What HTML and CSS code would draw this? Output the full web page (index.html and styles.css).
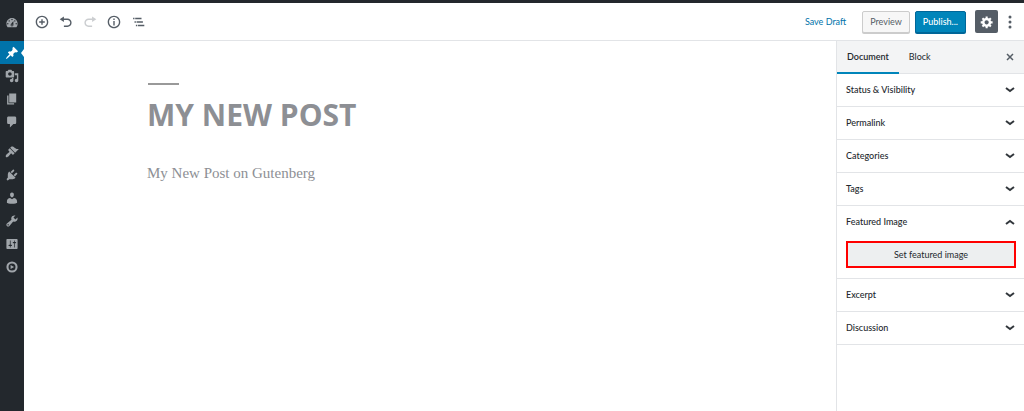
FILE: index.html
```
<!DOCTYPE html>
<html lang="en">
<head>
    <meta charset="UTF-8">
    <meta name="viewport" content="width=device-width, initial-scale=1.0">
    <title>Edit Post</title>
    <link rel="stylesheet" href="styles.css">
</head>
<body>
    <div class="adminbar"></div>

    <div class="layout">
        <!-- Admin menu -->
        <nav class="admin-menu" aria-label="Main menu">
            <a href="#" aria-label="Dashboard"><svg viewBox="0 0 20 20"><path d="M3.76 16h12.48c1.1-1.37 1.76-3.11 1.76-5 0-4.42-3.58-8-8-8s-8 3.58-8 8c0 1.89.66 3.63 1.76 5zM10 4c.55 0 1 .45 1 1s-.45 1-1 1-1-.45-1-1 .45-1 1-1zM6 6c.55 0 1 .45 1 1s-.45 1-1 1-1-.45-1-1 .45-1 1-1zm8 0c.55 0 1 .45 1 1s-.45 1-1 1-1-.45-1-1 .45-1 1-1zm-5.37 5.55L12 7v6c0 1.1-.9 2-2 2s-2-.9-2-2c0-.57.24-1.08.63-1.45zM4 10c.55 0 1 .45 1 1s-.45 1-1 1-1-.45-1-1 .45-1 1-1zm12 0c.55 0 1 .45 1 1s-.45 1-1 1-1-.45-1-1 .45-1 1-1zm-5 3c0-.55-.45-1-1-1s-1 .45-1 1 .45 1 1 1 1-.45 1-1z"/></svg></a>
            <a href="#" class="current group-start" aria-label="Posts"><svg viewBox="0 0 20 20"><path d="M10.44 3.02l1.82-1.82 6.36 6.35-1.83 1.82c-1.05-.68-2.48-.57-3.41.36l-.75.75c-.92.93-1.04 2.35-.35 3.41l-1.83 1.82-2.41-2.41-2.8 2.79c-.42.42-3.38 2.71-3.8 2.29s1.86-3.39 2.28-3.81l2.79-2.79L4.1 9.36l1.83-1.82c1.05.69 2.48.57 3.4-.36l.75-.75c.93-.92 1.05-2.35.36-3.41z"/></svg></a>
            <a href="#" aria-label="Media"><svg viewBox="0 0 20 20"><path d="M13 11V4c0-.55-.45-1-1-1h-1.67L9 1H5L3.67 3H2c-.55 0-1 .45-1 1v7c0 .55.45 1 1 1h10c.55 0 1-.45 1-1zM7 4.5c1.38 0 2.5 1.12 2.5 2.5S8.38 9.5 7 9.5 4.5 8.38 4.5 7 5.62 4.5 7 4.5zM14 6h5v10.5c0 1.38-1.12 2.5-2.5 2.5S14 17.88 14 16.5s1.12-2.5 2.5-2.5c.17 0 .34.02.5.05V9h-3V6zm-4 8.05V13h2v3.5c0 1.38-1.12 2.5-2.5 2.5S7 17.88 7 16.5 8.12 14 9.5 14c.17 0 .34.02.5.05z"/></svg></a>
            <a href="#" aria-label="Pages"><svg viewBox="0 0 20 20"><path d="M6 15V2h10v13H6zm-1 1h8v2H3V5h2v11z"/></svg></a>
            <a href="#" aria-label="Comments"><svg viewBox="0 0 20 20"><path d="M5 2h9c1.1 0 2 .9 2 2v7c0 1.1-.9 2-2 2h-2l-5 5v-5H5c-1.1 0-2-.9-2-2V4c0-1.1.9-2 2-2z"/></svg></a>
            <a href="#" class="group-start" aria-label="Appearance"><svg viewBox="0 0 20 20"><path d="M14.48 11.06L7.41 3.99l1.5-1.5c.5-.56 2.3-.47 3.51.32 1.21.8 1.43 1.28 2.91 2.1 1.18.64 2.45 1.26 4.45.85zm-.71.71L6.7 4.7 4.93 6.47c-.39.39-.39 1.02 0 1.41l1.06 1.06c.39.39.39 1.03 0 1.42-.6.6-1.43 1.11-2.21 1.69-.35.26-.7.53-1.01.84C1.43 14.23.4 16.08 1.4 17.07c.99 1 2.84-.03 4.18-1.36.31-.31.58-.66.85-1.02.57-.78 1.08-1.61 1.69-2.21.39-.39 1.02-.39 1.41 0l1.06 1.06c.39.39 1.02.39 1.41 0z"/></svg></a>
            <a href="#" aria-label="Plugins"><svg viewBox="0 0 20 20"><path d="M13.11 4.36L9.87 7.6 8 5.73l3.24-3.24c.35-.34 1.05-.2 1.56.32.52.51.66 1.21.31 1.55zm-8 1.77l.91-1.12 9.01 9.01-1.19.84c-.71.71-2.63 1.16-3.82 1.16H6.14L4.9 17.26c-.59.59-1.54.59-2.12 0-.59-.58-.59-1.53 0-2.12l1.24-1.24v-3.88c0-1.13.4-3.19 1.09-3.89zm7.26 3.97l3.24-3.24c.34-.35 1.04-.21 1.55.31.52.51.66 1.21.31 1.55l-3.24 3.25z"/></svg></a>
            <a href="#" aria-label="Users"><svg viewBox="0 0 20 20"><path d="M10 9.25c-2.27 0-2.73-3.44-2.73-3.44C7 4.02 7.82 2 9.97 2c2.16 0 2.98 2.02 2.71 3.81 0 0-.41 3.44-2.68 3.44zm0 2.57L12.72 10c2.39 0 4.52 2.33 4.52 4.53v2.49s-3.65 1.13-7.24 1.13c-3.65 0-7.24-1.13-7.24-1.13v-2.49c0-2.25 1.94-4.48 4.47-4.48z"/></svg></a>
            <a href="#" aria-label="Tools"><svg viewBox="0 0 20 20"><path d="M16.68 9.77c-1.34 1.34-3.3 1.67-4.95.99l-5.41 6.52c-.99.99-2.59.99-3.58 0s-.99-2.59 0-3.57l6.52-5.42c-.68-1.65-.35-3.61.99-4.95 1.28-1.28 3.12-1.62 4.72-1.06l-2.89 2.89 2.82 2.82 2.86-2.87c.53 1.58.18 3.39-1.08 4.65zM3.81 16.21c.4.39 1.04.39 1.43 0 .4-.4.4-1.04 0-1.43-.39-.4-1.03-.4-1.43 0-.39.39-.39 1.03 0 1.43z"/></svg></a>
            <a href="#" aria-label="Settings"><svg viewBox="0 0 20 20"><path d="M18 16V4c0-.55-.45-1-1-1H3c-.55 0-1 .45-1 1v12c0 .55.45 1 1 1h14c.55 0 1-.45 1-1zM8 11h1c.55 0 1 .45 1 1s-.45 1-1 1H8v1.5c0 .28-.22.5-.5.5s-.5-.22-.5-.5V13H6c-.55 0-1-.45-1-1s.45-1 1-1h1V5.5c0-.28.22-.5.5-.5s.5.22.5.5V11zm5-2h-1c-.55 0-1-.45-1-1s.45-1 1-1h1V5.5c0-.28.22-.5.5-.5s.5.22.5.5V7h1c.55 0 1 .45 1 1s-.45 1-1 1h-1v5.5c0 .28-.22.5-.5.5s-.5-.22-.5-.5V9z"/></svg></a>
            <button type="button" aria-label="Collapse menu"><svg viewBox="0 0 20 20"><path fill-rule="evenodd" d="M10 2a8 8 0 1 0 0 16 8 8 0 0 0 0-16zm0 3a5 5 0 1 1 0 10 5 5 0 0 1 0-10zM8 7v6l5-3z"/></svg></button>
        </nav>

        <div class="editor">
            <!-- Toolbar -->
            <header class="toolbar">
                <div class="tools">
                    <button type="button" aria-label="Add block"><svg viewBox="0 0 20 20"><path d="M10 1c-5 0-9 4-9 9s4 9 9 9 9-4 9-9-4-9-9-9zm0 16c-3.9 0-7-3.1-7-7s3.1-7 7-7 7 3.1 7 7-3.1 7-7 7zm1-11H9v3H6v2h3v3h2v-3h3V9h-3V6z"/></svg></button>
                    <button type="button" aria-label="Undo"><svg viewBox="0 0 20 20"><path d="M12 5H7V2L1 6l6 4V7h5c2.2 0 4 1.8 4 4s-1.8 4-4 4H7v2h5c3.3 0 6-2.7 6-6s-2.7-6-6-6z"/></svg></button>
                    <button type="button" aria-label="Redo" disabled><svg viewBox="0 0 20 20"><path d="M8 5h5V2l6 4-6 4V7H8c-2.2 0-4 1.8-4 4s1.8 4 4 4h5v2H8c-3.3 0-6-2.7-6-6s2.7-6 6-6z"/></svg></button>
                    <button type="button" aria-label="Content structure"><svg viewBox="0 0 20 20"><path d="M10 1c-5 0-9 4-9 9s4 9 9 9 9-4 9-9-4-9-9-9zm0 16c-3.9 0-7-3.1-7-7s3.1-7 7-7 7 3.1 7 7-3.1 7-7 7zM9 5h2v2H9zm0 3.5h2V15H9z"/></svg></button>
                    <button type="button" aria-label="Block navigation"><svg viewBox="0 0 20 20"><path d="M3 4h2v2H3zm3 0h9v2H6zM5 9h2v2H5zm3 0h9v2H8zM7 14h2v2H7zm3 0h9v2h-9z"/></svg></button>
                </div>
                <div class="actions">
                    <button type="button" class="btn btn-link">Save Draft</button>
                    <button type="button" class="btn btn-preview">Preview</button>
                    <button type="button" class="btn btn-publish">Publish...</button>
                    <button type="button" class="btn-settings" aria-label="Settings"><svg viewBox="0 0 20 20"><path d="M18 12h-2.18c-.17.7-.44 1.35-.81 1.93l1.54 1.54-2.1 2.1-1.54-1.54c-.58.36-1.23.63-1.91.79V19H8v-2.18c-.68-.16-1.33-.43-1.91-.79l-1.54 1.54-2.12-2.12 1.54-1.54c-.36-.58-.63-1.23-.79-1.91H1V9.03h2.17c.16-.7.44-1.35.8-1.94L2.43 5.55l2.1-2.1 1.54 1.54c.58-.37 1.24-.64 1.93-.81V2h3v2.18c.68.16 1.33.43 1.91.79l1.54-1.54 2.12 2.12-1.54 1.54c.36.59.64 1.24.8 1.94H18V12zm-8.5 1.5c1.66 0 3-1.34 3-3s-1.34-3-3-3-3 1.34-3 3 1.34 3 3 3z"/></svg></button>
                    <button type="button" class="btn-more" aria-label="More options"><svg viewBox="0 0 14 14"><circle cx="7" cy="2" r="1.5"/><circle cx="7" cy="7" r="1.5"/><circle cx="7" cy="12" r="1.5"/></svg></button>
                </div>
            </header>

            <div class="workspace">
                <!-- Post content -->
                <main class="post">
                    <h1>MY NEW POST</h1>
                    <p>My New Post on Gutenberg</p>
                </main>

                <!-- Document settings -->
                <aside class="settings">
                    <div class="tabs">
                        <button type="button" class="tab active">Document</button>
                        <button type="button" class="tab">Block</button>
                        <button type="button" class="close" aria-label="Close settings"><svg viewBox="0 0 10 10"><path d="M2 2l6 6M8 2l-6 6"/></svg></button>
                    </div>
                    <section class="panel">
                        <button type="button" class="panel-toggle">Status &amp; Visibility<svg viewBox="0 0 10 10"><path d="M1 3l4 3 4-3"/></svg></button>
                    </section>
                    <section class="panel">
                        <button type="button" class="panel-toggle">Permalink<svg viewBox="0 0 10 10"><path d="M1 3l4 3 4-3"/></svg></button>
                    </section>
                    <section class="panel">
                        <button type="button" class="panel-toggle">Categories<svg viewBox="0 0 10 10"><path d="M1 3l4 3 4-3"/></svg></button>
                    </section>
                    <section class="panel">
                        <button type="button" class="panel-toggle">Tags<svg viewBox="0 0 10 10"><path d="M1 3l4 3 4-3"/></svg></button>
                    </section>
                    <section class="panel">
                        <button type="button" class="panel-toggle" aria-expanded="true">Featured Image<svg viewBox="0 0 10 10"><path d="M1 7l4-3 4 3"/></svg></button>
                        <div class="panel-body">
                            <button type="button" class="set-image">Set featured image</button>
                        </div>
                    </section>
                    <section class="panel">
                        <button type="button" class="panel-toggle">Excerpt<svg viewBox="0 0 10 10"><path d="M1 3l4 3 4-3"/></svg></button>
                    </section>
                    <section class="panel">
                        <button type="button" class="panel-toggle">Discussion<svg viewBox="0 0 10 10"><path d="M1 3l4 3 4-3"/></svg></button>
                    </section>
                </aside>
            </div>
        </div>
    </div>
</body>
</html>
```

FILE: styles.css
```
* {
    box-sizing: border-box;
}
body {
    margin: 0;
    min-height: 100vh;
    display: flex;
    flex-direction: column;
    background: #fff;
    color: #23282d;
    font-family: Lato, "Open Sans", sans-serif;
    font-size: 9px;
    line-height: 12px;
}
button {
    margin: 0;
    padding: 0;
    border: none;
    background: none;
    color: inherit;
    font: inherit;
    cursor: pointer;
}
svg {
    display: block;
    fill: currentColor;
}
.adminbar {
    height: 3px;
    background: #23282d;
}
.layout {
    flex: 1;
    display: flex;
}

/* Admin menu */
.admin-menu {
    width: 24px;
    padding-top: 8px;
    background: #23282d;
    color: #a0a5aa;
}
.admin-menu a,
.admin-menu button {
    position: relative;
    display: flex;
    align-items: center;
    justify-content: center;
    width: 100%;
    height: 23px;
    color: inherit;
}
.admin-menu svg {
    width: 14px;
    height: 14px;
}
.admin-menu .group-start {
    margin-top: 7px;
}
.admin-menu .current {
    background: #0073aa;
    color: #fff;
}
.admin-menu .current::after {
    content: "";
    position: absolute;
    right: 0;
    top: 8px;
    border: 4px solid transparent;
    border-left-width: 0;
    border-right: 3px solid #fff;
}

/* Toolbar */
.editor {
    flex: 1;
    display: flex;
    flex-direction: column;
}
.toolbar {
    display: flex;
    justify-content: space-between;
    align-items: center;
    height: 38px;
    padding: 0 7px 0 6px;
    border-bottom: 1px solid #e2e4e7;
    color: #555d66;
}
.tools,
.actions {
    display: flex;
    align-items: center;
}
.tools button {
    display: flex;
    align-items: center;
    justify-content: center;
    width: 24px;
    height: 24px;
}
.tools button:disabled {
    opacity: 0.3;
}
.tools svg {
    width: 14px;
    height: 14px;
}
.btn {
    height: 22px;
    margin-right: 5px;
    padding: 0 7px;
    border-radius: 2px;
}
.btn-link {
    color: #0073aa;
}
.btn-link,
.btn-publish {
    margin-right: 9px;
}
.btn-preview {
    border: 1px solid #ccc;
    background: #f7f7f7;
    box-shadow: 0 1px 0 #ccc;
}
.btn-publish {
    border: 1px solid #006799;
    background: #0085ba;
    box-shadow: 0 1px 0 #006799;
    color: #fff;
    font-weight: 500;
}
.btn-settings {
    display: flex;
    align-items: center;
    justify-content: center;
    width: 23px;
    height: 23px;
    border-radius: 2px;
    background: #555d66;
    color: #fff;
}
.btn-more {
    margin-left: 5px;
}
.actions svg {
    width: 14px;
    height: 14px;
}

/* Post content */
.workspace {
    flex: 1;
    display: flex;
}
.post {
    flex: 1;
    padding: 42px 20px 20px 123px;
    color: #8d8f94;
}
.post h1 {
    margin: 0 0 26px;
    font-family: "Open Sans", sans-serif;
    font-size: 30px;
    line-height: 40px;
}
.post h1::before {
    content: "";
    display: block;
    width: 31px;
    height: 2px;
    margin: 0 0 10px 1px;
    background: #999;
}
.post p {
    margin: 0;
    font-family: "Liberation Serif", serif;
    font-size: 15px;
    line-height: 24px;
}

/* Document settings */
.settings {
    width: 188px;
    border-left: 1px solid #e2e4e7;
}
.tabs {
    display: flex;
    height: 33px;
    border-bottom: 1px solid #e2e4e7;
    background: #f3f4f5;
}
.tab {
    height: 33px;
    padding: 0 10px;
    border-bottom: 2px solid transparent;
}
.tab.active {
    border-bottom-color: #0085ba;
    font-weight: 600;
}
.close {
    margin-left: auto;
    padding: 0 9px;
}
.settings svg {
    width: 10px;
    height: 10px;
    fill: none;
    stroke: #32373c;
    stroke-width: 2;
}
.settings .close svg {
    stroke: #555d66;
    stroke-width: 1.5;
}
.panel {
    border-bottom: 1px solid #e2e4e7;
}
.panel-toggle {
    display: flex;
    align-items: center;
    justify-content: space-between;
    width: 100%;
    height: 32px;
    padding: 0 9px;
    font-weight: 500;
}
.panel-body {
    padding: 3px 8px 10px 9px;
}
.set-image {
    width: 100%;
    height: 27px;
    border: 2px solid #f00;
    background: #edeff0;
}
```
